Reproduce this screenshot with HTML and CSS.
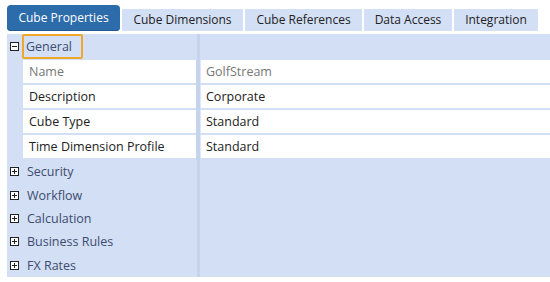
FILE: index.html
```html
<!DOCTYPE html>
<html lang="en">
<head>
  <meta charset="UTF-8">
  <title>Cube Properties</title>
  <link rel="stylesheet" href="styles.css">
</head>
<body>
<div class="tabs">
  <div class="tab active t-props">Cube Properties</div>
  <div class="tab t-dims">Cube Dimensions</div>
  <div class="tab t-refs">Cube References</div>
  <div class="tab t-access">Data Access</div>
  <div class="tab t-integ">Integration</div>
</div>
<div class="grid">
  <div class="cat open">
    <span class="toggle"><svg width="9" height="9" viewBox="0 0 9 9"><rect x="0.5" y="0.5" width="8" height="8" fill="#fff" stroke="#222"/><path d="M2 4.5h5" stroke="#222"/></svg></span>
    <span class="cat-label focus">General</span>
    <span class="cat-fill"></span>
  </div>
  <div class="prop">
    <div class="name muted">Name</div>
    <div class="value muted">GolfStream</div>
  </div>
  <div class="prop">
    <div class="name">Description</div>
    <div class="value">Corporate</div>
  </div>
  <div class="prop">
    <div class="name">Cube Type</div>
    <div class="value">Standard</div>
  </div>
  <div class="prop">
    <div class="name">Time Dimension Profile</div>
    <div class="value">Standard</div>
  </div>
  <div class="cat">
    <span class="toggle"><svg width="9" height="9" viewBox="0 0 9 9"><rect x="0.5" y="0.5" width="8" height="8" fill="#fff" stroke="#222"/><path d="M2 4.5h5M4.5 2v5" stroke="#222"/></svg></span>
    <span class="cat-label">Security</span>
    <span class="cat-fill"></span>
  </div>
  <div class="cat">
    <span class="toggle"><svg width="9" height="9" viewBox="0 0 9 9"><rect x="0.5" y="0.5" width="8" height="8" fill="#fff" stroke="#222"/><path d="M2 4.5h5M4.5 2v5" stroke="#222"/></svg></span>
    <span class="cat-label">Workflow</span>
    <span class="cat-fill"></span>
  </div>
  <div class="cat">
    <span class="toggle"><svg width="9" height="9" viewBox="0 0 9 9"><rect x="0.5" y="0.5" width="8" height="8" fill="#fff" stroke="#222"/><path d="M2 4.5h5M4.5 2v5" stroke="#222"/></svg></span>
    <span class="cat-label">Calculation</span>
    <span class="cat-fill"></span>
  </div>
  <div class="cat">
    <span class="toggle"><svg width="9" height="9" viewBox="0 0 9 9"><rect x="0.5" y="0.5" width="8" height="8" fill="#fff" stroke="#222"/><path d="M2 4.5h5M4.5 2v5" stroke="#222"/></svg></span>
    <span class="cat-label">Business Rules</span>
    <span class="cat-fill"></span>
  </div>
  <div class="cat">
    <span class="toggle"><svg width="9" height="9" viewBox="0 0 9 9"><rect x="0.5" y="0.5" width="8" height="8" fill="#fff" stroke="#222"/><path d="M2 4.5h5M4.5 2v5" stroke="#222"/></svg></span>
    <span class="cat-label">FX Rates</span>
    <span class="cat-fill"></span>
  </div>
</div>
</body>
</html>
```

FILE: styles.css
```css
body{
  margin: 0;
  background: #fff;
  font-family: "Open Sans", "Noto Sans", Arial, sans-serif;
  font-size: 12.5px;
  color: #222;
}
.tabs{
  display: flex;
  align-items: flex-end;
  height: 31px;
  padding-left: 7px;
}
.tab{
  height: 22px;
  line-height: 22px;
  margin-right: 2px;
  background: #d3dff5;
  color: #222;
  font-size: 12px;
  text-align: center;
  white-space: nowrap;
}
.tab.active{
  height: 26px;
  line-height: 25px;
  background: #2d6cab;
  color: #fff;
  border-radius: 4px;
  box-shadow: inset 0 -1px 0 #245a92;
}
.t-props{width: 113px;}
.t-dims{width: 121px;}
.t-refs{width: 117px;}
.t-access{width: 88px;}
.t-integ{width: 84px;}
.grid{
  margin: 3px 0 0 7px;
  background: #d3dff5;
  height: 243px;
  display: flex;
  flex-direction: column;
}
.cat{
  display: grid;
  grid-template-columns: 19px 171px 3px 1fr;
  align-items: center;
  height: 23.5px;
  color: #3d4c6e;
}
.cat.open{
  height: 26px;
}
.toggle{
  display: flex;
  padding-left: 3px;
}
.toggle svg{display: block;}
.cat-label{
  justify-self: start;
  padding: 0 0 0 1px;
  line-height: 21px;
}
.cat-label.focus{
  border: 2px solid #f0a82a;
  border-radius: 2px;
  padding: 0 9px 0 2px;
  margin-left: -4px;
}
.cat-fill{
  grid-column: 3;
  align-self: stretch;
  background: #c5d3ed;
}
.prop{
  display: grid;
  grid-template-columns: 16px 173px 4px 1fr;
  height: 23px;
  margin-bottom: 2px;
}
.name, .value{
  background: #fff;
  line-height: 23px;
  padding-left: 6px;
  white-space: nowrap;
}
.name{grid-column: 2;}
.value{
  grid-column: 4;
  padding-left: 5px;
  border-left: 1px solid #dfe7f7;
}
.prop::after{
  content: "";
  grid-column: 3;
  grid-row: 1;
  background: #c5d3ed;
  margin-bottom: -2px;
}
.muted{color: #777;}
```
